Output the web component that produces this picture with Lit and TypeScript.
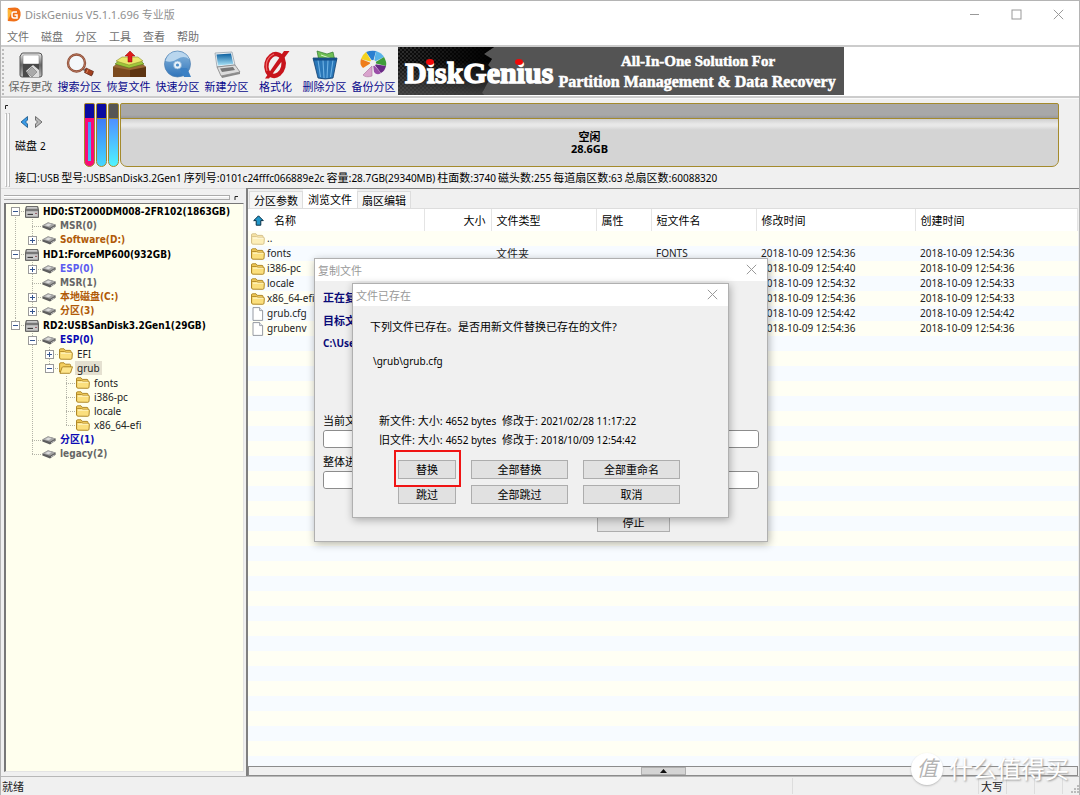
import { LitElement, html, css, svg, nothing } from "lit";
import { customElement } from "lit/decorators.js";
import { classMap } from "lit/directives/class-map.js";

const folderIcon = (faded = false) => html`<svg class="ico ${faded ? "faded" : ""}" width="14" height="12" viewBox="0 0 14 12" aria-hidden="true">
  <path d="M.5 10V2Q.5.8 1.6.8H5L6.4 2.4H11Q12 2.4 12 3.4V5" fill="#f4cf5e" stroke="#a87f1c" stroke-width=".9"/>
  <path d="M2 11.2Q.6 11 .6 10V4.2Q.6 3.4 1.6 3.4H5.6L7 4.4H12.4Q13.5 4.4 13.4 5.4L13 10.2Q12.9 11.3 11.8 11.3Z" fill="#fbdf7d" stroke="#a87f1c" stroke-width=".9"/>
  <path d="M2 5.2H12" stroke="#fff3bd" stroke-width="1.2"/>
</svg>`;

const openFolderIcon = html`<svg class="ico" width="14" height="12" viewBox="0 0 14 12" aria-hidden="true">
  <path d="M.6 10V2Q.6.8 1.7.8H5L6.4 2.2H10.6Q11.6 2.2 11.6 3.4V10Z" fill="#f4cf5e" stroke="#a87f1c" stroke-width=".9"/>
  <path d="M1 11.3L3 5.6Q3.3 4.8 4.2 4.8H13.5L11.6 10.6Q11.3 11.3 10.5 11.3Z" fill="#fde58c" stroke="#a87f1c" stroke-width=".9"/>
</svg>`;

const fileIcon = html`<svg class="ico" width="14" height="14" viewBox="0 0 14 14" aria-hidden="true">
  <path d="M2 .6H8.6L11.6 3.6V13.4H2Z" fill="#fff" stroke="#8a8f98" stroke-width=".9"/>
  <path d="M8.6.6V3.6H11.6" fill="#e3e7ee" stroke="#8a8f98" stroke-width=".8"/>
</svg>`;

const diskIcon = html`<svg class="ico" width="14" height="12" viewBox="0 0 14 12" aria-hidden="true">
  <path d="M1.2.6H12.8L13.5 4V11.4H.5V4Z" fill="#a4a4a4" stroke="#555" stroke-width=".9"/>
  <path d="M2 1.800H12" stroke="#ddd"/><path d="M1 4H13" stroke="#5a5a5a" stroke-width="1.200"/>
  <rect x="1.400" y="5.500" width="11.200" height="4.800" fill="#c9c9c9"/>
  <path d="M2.500 8.400H8" stroke="#333" stroke-width="1.1"/><circle cx="11" cy="7.4" r=".7" fill="#7a2030"/>
</svg>`;

const partIcon = html`<svg class="ico" width="14" height="12" viewBox="0 0 14 12" aria-hidden="true">
  <path d="M.4 5.6L6 2.4L13.6 4.6V6.8L8 10.4L.4 7.6Z" fill="#5d5d5d"/>
  <path d="M.4 5.4L6 2.2L13.6 4.4L8 7.8Z" fill="#a4a4a4"/>
  <path d="M3 5.2L6.2 3.4L9.6 4.4L6.6 6.2Z" fill="#dcdcdc"/>
  <path d="M9 9L12.4 6.8" stroke="#ddd" stroke-width=".8"/>
</svg>`;

const closeGlyph = html`<svg width="11" height="11" viewBox="0 0 11 11" aria-hidden="true"><path d="M.8.8L10.2 10.2M10.2.8L.8 10.2" stroke="#999" stroke-width="1"/></svg>`;

const tools = [
  { label: "保存更改", off: true, art: svg`
    <path d="M4 4Q4 2 6 2H22Q25 2 25 5V24Q25 26 23 26H5Q3 26 3 24V5Z" fill="url(#metal)" stroke="#555"/>
    <rect x="6" y="4" width="16" height="9" rx="1" fill="#fff" stroke="#888" stroke-width=".6"/>
    <path d="M6 13H22V26H6Z" fill="#4a4a4a"/><path d="M9 20L16 14L22 19V26H13Z" fill="#ddd"/>
    <path d="M10 21L15 16L20 21L15 26Z" fill="#aaa" stroke="#777" stroke-width=".6"/>` },
  { label: "搜索分区", art: svg`
    <path d="M17 18L27 23" stroke="#777" stroke-width="2"/>
    <circle cx="10.500" cy="12" r="8.500" fill="#f4f8fb" stroke="#8b4a33" stroke-width="2.400"/>
    <circle cx="10.500" cy="12" r="8.500" fill="none" stroke="#c98a70" stroke-width=".7"/>
    <path d="M20 17L27.500 20.500L25.500 25L18.500 21.500Z" fill="#a3401f" stroke="#5e2413" stroke-width=".7"/>
    <path d="M22 18.500L20.500 22" stroke="#e08a60" stroke-width="1"/>` },
  { label: "恢复文件", art: svg`
    <path d="M-2 16L4 11H25L31 16V26H-2Z" fill="#5d3411"/><path d="M-2 16H15V26H-2Z" fill="#7b4a1e"/>
    <path d="M-2 16L4 11H25L31 16L15 19Z" fill="#9b6a35"/>
    <path d="M0 13L6 8H24L29 13L14 17Z" fill="#9dc63a" stroke="#55761b" stroke-width=".6"/>
    <path d="M1 10L7 6H23L28 10L14 14Z" fill="#e9e86a" stroke="#8c8f2c" stroke-width=".6"/>
    <path d="M13 11V5H10L15 0L20 5H17V11Z" fill="#e01919" stroke="#8d0a0a" stroke-width=".5"/>` },
  { label: "快速分区", art: svg`
    <circle cx="13.500" cy="13" r="13" fill="url(#blue)" stroke="#4f7fb0" stroke-width=".7"/>
    <path d="M1.500 10Q8 12 13.500 8Q20 4 25.500 8.500Q22 1 13.500 .6Q4 1 1.500 10Z" fill="#b9d6ee"/>
    <path d="M15 17H23L27 26H20Z" fill="#3b80c4"/>
    <circle cx="13.500" cy="14" r="4" fill="#e8f2fa" stroke="#7ba7d0" stroke-width=".7"/><circle cx="13.500" cy="14" r="1.600" fill="#4d8dc9"/>` },
  { label: "新建分区", art: svg`
    <path d="M2 2L19 1L22 14L4 16Z" fill="#e8eef2" stroke="#8e9aa3" stroke-width=".7"/>
    <path d="M3.500 3.500L18 2.500L20.300 13L5 14.500Z" fill="url(#screen)"/>
    <path d="M4 16L22 14L27 21L8 25Z" fill="#dcdcdc" stroke="#777" stroke-width=".7"/>
    <path d="M7 17.500L20 16L22 19L9 21Z" fill="#777"/><path d="M8 25L27 21V23L9 27Z" fill="#8a8a8a"/>` },
  { label: "格式化", art: svg`
    <ellipse cx="13" cy="14" rx="8.500" ry="11" transform="rotate(14 13 14)" fill="none" stroke="#c8141c" stroke-width="4.500"/>
    <path d="M3 27.500L22 0H27.500L7 27.500Z" fill="#c8141c"/>
    <path d="M5 20Q2 8 12 3" fill="none" stroke="#ef6a6a" stroke-width="1.200"/>` },
  { label: "删除分区", art: svg`
    <path d="M6 0L16 3L22 1L24 10H8Z" fill="#6fbf55" stroke="#2f7a2c" stroke-width=".7"/><path d="M10 4L21 8" stroke="#d9f3c9"/>
    <path d="M2 7H26L22 27Q14 29 7 27Z" fill="#2a77b8" stroke="#123f6e" stroke-width=".8"/>
    <path d="M7 9L9.500 26M12 9L13 27M17 9L16 27M22 9L19.500 26" stroke="#6fb2e4" stroke-width="1.100"/>
    <path d="M2 7H26V9.500H2.500Z" fill="#164f86"/>` },
  { label: "备份分区", art: svg`
    <path d="M13 11L6 1Q11-1 16 0Z" fill="#2a7fd0"/><path d="M14 11L16 0Q22 2 24 6Z" fill="#58b3e8"/>
    <path d="M14 12L24 6Q27 11 26 15Z" fill="#3f9d3a"/><path d="M14 13L26 15Q25 20 21 22Z" fill="#6a2a86"/>
    <path d="M13 13L21 22Q17 25 14 21Z" fill="#9a4ea8"/>
    <path d="M12 11L6 1Q2 4 1 8Z" fill="#f4d21f"/><path d="M11 12L1 8Q-1 13 3 17Z" fill="#ee7d1b"/>
    <path d="M12 15L3 24Q6 27 12 25Z" fill="#d9a3cd" stroke="#a66f9b" stroke-width=".6"/>
    <circle cx="13" cy="12" r="3" fill="#f1f1f1"/>` },
];

interface Node {
  name: string;
  kind: "disk" | "part" | "folder" | "open";
  tone?: string;
  open?: boolean;
  closed?: boolean;
  children?: Node[];
}

const tree: Node[] = [
  { name: "HD0:ST2000DM008-2FR102(1863GB)", kind: "disk", tone: "black", open: true, children: [
    { name: "MSR(0)", kind: "part", tone: "grey" },
    { name: "Software(D:)", kind: "part", tone: "brown", closed: true },
  ] },
  { name: "HD1:ForceMP600(932GB)", kind: "disk", tone: "black", open: true, children: [
    { name: "ESP(0)", kind: "part", tone: "violet", closed: true },
    { name: "MSR(1)", kind: "part", tone: "grey" },
    { name: "本地磁盘(C:)", kind: "part", tone: "brown", closed: true },
    { name: "分区(3)", kind: "part", tone: "brown", closed: true },
  ] },
  { name: "RD2:USBSanDisk3.2Gen1(29GB)", kind: "disk", tone: "black", open: true, children: [
    { name: "ESP(0)", kind: "part", tone: "navy", open: true, children: [
      { name: "EFI", kind: "folder", closed: true },
      { name: "grub", kind: "open", open: true, children: [
        { name: "fonts", kind: "folder" },
        { name: "i386-pc", kind: "folder" },
        { name: "locale", kind: "folder" },
        { name: "x86_64-efi", kind: "folder" },
      ] },
    ] },
    { name: "分区(1)", kind: "part", tone: "navy" },
    { name: "legacy(2)", kind: "part", tone: "grey" },
  ] },
];

const files = [
  { name: "..", icon: folderIcon(true), type: "", short: "", mod: "", made: "" },
  { name: "fonts", icon: folderIcon(), type: "文件夹", short: "FONTS", mod: "2018-10-09 12:54:36", made: "2018-10-09 12:54:36" },
  { name: "i386-pc", icon: folderIcon(), type: "", short: "", mod: "2018-10-09 12:54:40", made: "2018-10-09 12:54:36" },
  { name: "locale", icon: folderIcon(), type: "", short: "", mod: "2018-10-09 12:54:32", made: "2018-10-09 12:54:33" },
  { name: "x86_64-efi", icon: folderIcon(), type: "", short: "", mod: "2018-10-09 12:54:36", made: "2018-10-09 12:54:33" },
  { name: "grub.cfg", icon: fileIcon, type: "", short: "", mod: "2018-10-09 12:54:42", made: "2018-10-09 12:54:42" },
  { name: "grubenv", icon: fileIcon, type: "", short: "", mod: "2018-10-09 12:54:36", made: "2018-10-09 12:54:36" },
];

const info = [
  ["接口", "USB"], ["型号", "USBSanDisk3.2Gen1"], ["序列号", "0101c24fffc066889e2c"],
  ["容量", "28.7GB(29340MB)"], ["柱面数", "3740"], ["磁头数", "255"],
  ["每道扇区数", "63"], ["总扇区数", "60088320"],
];

const base = css`
  * { box-sizing: border-box; }
  button {
    font: inherit;
    color: inherit;
    padding: 0;
    border: 0;
    background: none;
  }
  .ico { display: block; flex: none; }
  .faded { opacity: .5; }
`;

@customElement("disk-tree")
export class DiskTree extends LitElement {
  static styles = [base, css`
    :host { display: block; font-size: 10px; padding-left: 1px; }
    ul { list-style: none; margin: 0; padding: 0; }
    ul ul { padding-left: 17px; }
    ul ul ul ul { padding-top: 1px; padding-bottom: 1px; }
    li {
      background: repeating-linear-gradient(#b4b4a8 0 1px, transparent 1px 2px) 8px 0 / 1px 100% no-repeat;
    }
    li:last-child { background-size: 1px 7px; }
    .root > li:first-child { background-position: 8px 7px; }
    .row {
      display: flex;
      align-items: center;
      height: 14px;
      background: repeating-linear-gradient(90deg, #b4b4a8 0 1px, transparent 1px 2px) 8px 7px / 10px 1px no-repeat;
    }
    .disk { height: 15px; }
    .slot { width: 18px; display: flex; padding-left: 4px; }
    .box { width: 9px; height: 9px; display: block; }
    .name { margin-left: 2px; padding: 0 2px; line-height: 14px; color: #222; white-space: nowrap; }
    .bold { font-weight: 700; font-family: "DejaVu Sans Condensed", "Noto Sans CJK SC", sans-serif; }
    .black { color: #000; }
    .grey { color: #666; }
    .brown { color: #b05a08; }
    .violet { color: #5c5cf0; }
    .navy { color: #0a0ab4; }
    .sel { background: #e4e0d0; }
  `];

  private node(n: Node): unknown {
    const icon = n.kind === "disk" ? diskIcon : n.kind === "part" ? partIcon : n.kind === "open" ? openFolderIcon : folderIcon();
    return html`<li>
      <div class=${classMap({ row: true, disk: n.kind === "disk" })}>
        <span class="slot">${n.open || n.closed ? html`<button class="box" aria-label=${n.open ? "折叠" : "展开"}>
          <svg class="ico" width="9" height="9" viewBox="0 0 9 9"><rect x=".5" y=".5" width="8" height="8" fill="#fff" stroke="#9a9a9a"/><path d=${n.open ? "M2 4.5H7" : "M2 4.5H7M4.5 2V7"} stroke="#35558f"/></svg>
        </button>` : nothing}</span>
        ${icon}
        <span class="name ${n.tone ? "bold " + n.tone : ""} ${n.kind === "open" ? "sel" : ""}">${n.name}</span>
      </div>
      ${n.children ? html`<ul>${n.children.map((c) => this.node(c))}</ul>` : nothing}
    </li>`;
  }

  render() {
    return html`<ul class="root">${tree.map((n) => this.node(n))}</ul>`;
  }
}

@customElement("dg-banner")
export class DgBanner extends LitElement {
  static styles = css`
    :host { display: block; width: 446px; height: 48px; }
    svg { display: block; }
    text { font-family: "Liberation Serif", serif; font-weight: 700; fill: #fff; stroke: #fff; }
    .brand { font-size: 30px; stroke-width: 1.4px; }
    .top { font-size: 15px; stroke-width: .5px; }
    .sub { font-size: 16px; stroke-width: .5px; }
  `;
  render() {
    return html`<svg width="446" height="48" viewBox="0 0 446 48" role="img" aria-label="DiskGenius">
      <defs>
        <pattern id="mesh" width="4" height="4" patternUnits="userSpaceOnUse"><rect width="4" height="4" fill="#111"/><rect width="2" height="2" fill="#3c3c3c"/><rect x="2" y="2" width="2" height="2" fill="#333"/></pattern>
        <linearGradient id="fade"><stop offset="0" stop-color="#000" stop-opacity=".2"/><stop offset=".6" stop-color="#000" stop-opacity=".7"/><stop offset="1" stop-color="#000"/></linearGradient>
        <linearGradient id="low" x2="0" y2="1"><stop offset=".3" stop-color="#555" stop-opacity="0"/><stop offset="1" stop-color="#555" stop-opacity=".7"/></linearGradient>
      </defs>
      <rect width="446" height="48" fill="#545454"/>
      <path d="M0 0H96L86 7L94 12L90 18L96 24L84 46L86 48H0Z" fill="url(#mesh)"/>
      <path d="M0 0H96L86 7L94 12L90 18L96 24L84 46L86 48H0Z" fill="url(#fade)"/>
      <rect width="100" height="48" fill="url(#low)"/>
      <text class="brand" x="7" y="36">DiskGenius</text>
      <ellipse cx="32" cy="15" rx="4" ry="3" fill="#f00808"/><ellipse cx="121" cy="15" rx="4" ry="3" fill="#f00808"/>
      <text class="top" x="300" y="19" text-anchor="middle">All-In-One Solution For</text>
      <text class="sub" x="299" y="40" text-anchor="middle">Partition Management &amp; Data Recovery</text>
    </svg>`;
  }
}

@customElement("copy-dialogs")
export class CopyDialogs extends LitElement {
  static styles = [base, css`
    :host { display: block; font-size: 11px; }
    .win {
      position: absolute;
      background: #f0f0f0;
      border: 1px solid #b0b0b0;
      box-shadow: 1px 2px 8px rgba(0, 0, 0, .3);
      color: #000;
    }
    .copy { left: 313px; top: 257px; width: 454px; height: 284px; }
    .exists { left: 351px; top: 282px; width: 377px; height: 235px; }
    header {
      display: flex;
      justify-content: space-between;
      align-items: center;
      height: 22px;
      background: #fff;
      color: #999;
      padding: 0 10px 0 3px;
    }
    header button { display: block; }
    .body { padding: 5px 8px; }
    .state { margin: 0; font-weight: 700; color: #0a0a78; line-height: 23px; }
    .lat { font-size: 10px; }
    .copy label { display: block; line-height: 18px; }
    .gap { height: 57px; }
    progress {
      appearance: none;
      display: block;
      width: 100%;
      height: 18px;
      margin-bottom: 5px;
      border: 1px solid #8c8c8c;
      border-radius: 3px;
      background: #fff;
    }
    progress::-webkit-progress-bar { background: #fff; border-radius: 3px; }
    .btn {
      height: 19px;
      line-height: 17px;
      background: #e1e1e1;
      border: 1px solid #adadad;
      text-align: center;
    }
    .stop { display: block; width: 73px; margin: 24px 0 0 274px; }
    .exists .body { padding: 11px 17px; }
    p { margin: 0; line-height: 19px; white-space: pre; }
    p span { line-height: 1; }
    .path { padding: 16px 3px 40px; }
    .meta { padding-left: 9px; }
    .acts {
      display: grid;
      grid-template-columns: 58px 97px 97px;
      gap: 6px 15px;
      padding: 11px 0 0 28px;
    }
    .mark {
      position: absolute;
      left: 393px;
      top: 449px;
      width: 67px;
      height: 37px;
      border: 2px solid #f01414;
      pointer-events: none;
    }
  `];
  render() {
    return html`
      <section class="win copy" role="dialog" aria-label="复制文件">
        <header><span>复制文件</span><button aria-label="关闭">${closeGlyph}</button></header>
        <div class="body">
          <p class="state">正在复</p>
          <p class="state">目标文</p>
          <p class="state lat">C:\\User</p>
          <div class="gap"></div>
          <label for="cur">当前文</label><progress id="cur" max="100" value="0"></progress>
          <label for="all">整体进</label><progress id="all" max="100" value="0"></progress>
          <button class="btn stop">停止</button>
        </div>
      </section>
      <section class="win exists" role="dialog" aria-label="文件已存在">
        <header><span>文件已存在</span><button aria-label="关闭">${closeGlyph}</button></header>
        <div class="body">
          <p>下列文件已存在。是否用新文件替换已存在的文件?</p>
          <p class="path lat">\\grub\\grub.cfg</p>
          <p class="meta">新文件: 大小: <span class="lat">4652 bytes</span>  修改于: <span class="lat">2021/02/28 11:17:22</span></p>
          <p class="meta">旧文件: 大小: <span class="lat">4652 bytes</span>  修改于: <span class="lat">2018/10/09 12:54:42</span></p>
          <div class="acts">
            <button class="btn">替换</button><button class="btn">全部替换</button><button class="btn">全部重命名</button>
            <button class="btn">跳过</button><button class="btn">全部跳过</button><button class="btn">取消</button>
          </div>
        </div>
      </section>
      <div class="mark"></div>`;
  }
}

@customElement("app-root")
export class AppRoot extends LitElement {
  static styles = [base, css`
    :host {
      display: flex;
      flex-direction: column;
      position: relative;
      height: 100vh;
      min-height: 600px;
      overflow: hidden;
      box-sizing: border-box;
      background: #f0f0f0;
      border: 1px solid #b4b4b4;
      border-bottom: 0;
      font-family: "Noto Sans", "Noto Sans CJK SC", sans-serif;
      font-size: 11px;
      color: #000;
    }
    .title {
      display: flex;
      align-items: center;
      height: 26px;
      background: #fff;
      color: #909090;
      padding-left: 6px;
    }
    .title h1 { font: inherit; margin: 0 auto 0 4px; }
    .title button { width: 42px; display: flex; justify-content: center; }
    .menu {
      display: flex;
      gap: 12px;
      height: 18px;
      background: #fff;
      padding-left: 6px;
      color: #707070;
    }
    .menu button { line-height: 19px; }
    .tools {
      display: flex;
      height: 53px;
      background: #fff;
      border-top: 2px solid #ccc;
      border-bottom: 2px solid #ccc;
    }
    .set {
      display: flex;
      padding-left: 5px;
      background: radial-gradient(circle at 1px 1px, #bbb 1px, transparent 1px) 1px 2px / 3px 4px repeat-y, #f0f0f0;
    }
    .set button {
      display: flex;
      flex-direction: column;
      align-items: center;
      width: 49px;
      padding-top: 4px;
      color: #0a0a8c;
      line-height: 13px;
      gap: 1px;
      white-space: nowrap;
    }
    .set .off { color: #666; }
    .set svg { overflow: visible; }
    .disk { display: flex; border-top: 1px solid #fafafa; padding: 4px 20px 4px 4px; height: 90px; }
    .grip { width: 10px; padding-top: 1px; }
    .grip div { display: flex; gap: 1px; height: 74px; margin-top: 3px; }
    .grip svg { display: block; }
    .grip i { width: 2px; border: 1px solid #bbb; border-left-color: #fff; }
    .panel { flex: 1; min-width: 0; display: grid; grid-template: 64px 22px / 69px 1fr; }
    .nav { padding-top: 12px; }
    .nav div { display: flex; gap: 5px; margin-bottom: 8px; padding-left: 5px; }
    .lat { font-size: 10px; }
    .bars { display: flex; gap: 1px; }
    .bar {
      width: 11px;
      border: 1px solid #a48a2c;
      border-radius: 2px 2px 6px 6px;
      background: linear-gradient(#0a0aa0 0 14px, #a48a2c 14px 15px, #3f7cf8 15px, #46d8ff);
    }
    .picked { background: linear-gradient(#0a0aa0 0 14px, transparent 14px), linear-gradient(#4a8cff, #3fc4f8) 3px 18px / 3px 39px no-repeat, #f80a78; }
    .other { background: linear-gradient(#555 0 14px, #a48a2c 14px 15px, #4f90ff 15px, #4ff4ff); }
    .free {
      flex: 1;
      border: 1px solid #a48a2c;
      border-radius: 2px 2px 7px 7px;
      background: linear-gradient(#a8a8a8 0 11px, #989898 14px, #a48a2c 14px 15px, #d0d0d0 15px, #e8e8e8 20px, #e8e8e8 22px, #d4d4d4 26px);
      padding-top: 27px;
      text-align: center;
      font-weight: 700;
      line-height: 12px;
    }
    .info { grid-column: 1 / 3; display: flex; gap: 2px; align-items: baseline; line-height: 21px; white-space: nowrap; margin: 0; }
    .info dt, .info dd { display: inline; margin: 0; }
    .main { flex: 1; min-height: 0; display: grid; grid-template-columns: 245px 1fr; }
    .left { display: flex; flex-direction: column; padding: 6px 2px 4px 3px; border-top: 1px solid #ddd; }
    .handle { display: flex; height: 8px; gap: 4px; }
    .handle div { width: 226px; height: 5px; border: 1px solid #aaa; border-left: 0; box-shadow: inset 0 1px #fff; }
    .tree {
      flex: 1;
      min-height: 0;
      background: #ffffee;
      border: 1px solid #e4e4e4;
      border-top-color: #777;
      border-left: 2px solid #777;
      overflow: hidden;
    }
    .right { display: flex; flex-direction: column; min-width: 0; border-left: 2px solid #808080; border-top: 1px solid #808080; padding-right: 1px; }
    .tabs { display: flex; align-items: flex-end; height: 20px; padding-left: 1px; border-bottom: 1px solid #ddd; }
    .tabs button { height: 17px; padding: 0 4px; line-height: 17px; background: #f6f6f6; border: 1px solid #ddd; border-bottom: 0; }
    .tabs .on { height: 19px; background: #fff; border-color: #fff; }
    .list {
      flex: 1;
      min-height: 0;
      overflow: hidden;
      background: repeating-linear-gradient(#fffff4 0 15px, #f7fbff 15px 30px) 0 22px;
    }
    table { width: 100%; border-collapse: collapse; table-layout: fixed; }
    th { height: 22px; background: #fff; font-weight: 400; text-align: left; padding: 0 5px; border-right: 1px solid #e4e4e4; }
    th.num { text-align: right; }
    .sort { display: flex; gap: 10px; align-items: center; }
    td { height: 15px; padding: 0 5px; font-size: 10px; line-height: 15px; white-space: nowrap; color: #222; }
    td.cjk { font-size: 11px; }
    td:first-child { padding-left: 3px; }
    .file { display: flex; align-items: center; gap: 2px; height: 15px; }
    .split {
      height: 10px;
      border: 1px solid #8c8c8c;
      display: flex;
      justify-content: center;
      flex: none;
    }
    .split button { width: 45px; background: #d4d4d4; border: 1px solid #b0b0b0; display: flex; align-items: center; justify-content: center; }
    .status { display: flex; align-items: center; height: 19px; border-top: 1px solid #b8b8b8; color: #222; padding-left: 1px; flex: none; }
    .status span { height: 16px; line-height: 18px; border-right: 1px solid #ddd; padding: 0 3px 0 2px; }
    .status .first { flex: 1; padding-left: 0; }
    .status .wide { width: 186px; }
    .status .slot { width: 28px; }
    .status svg { margin: 6px 0 0 8px; width: 8px; }
    .water {
      position: absolute;
      right: 10px;
      bottom: 9px;
      display: flex;
      align-items: center;
      gap: 6px;
      color: #fff;
      font-size: 24px;
      line-height: 34px;
      text-shadow: 1px 1px 2px #999;
    }
    .seal { width: 32px; height: 32px; border-radius: 50%; background: #fff; box-shadow: 0 1px 2px #bbb; color: #b4b4b4; font-size: 21px; line-height: 30px; text-align: center; text-shadow: none; font-style: italic; }
  `];

  render() {
    return html`
      <div class="title">
        <svg width="14" height="15" viewBox="0 0 14 15" aria-hidden="true"><path d="M1 1L8 .6Q14 1 13.6 8Q13 14 7 14.600L.8 14Z" fill="#f07018"/><path d="M.6 1.500L5 4L3 9L1 13Z" fill="#ffb638"/><path d="M10 5H6.500Q5 5 5 7V9Q5 11 7 11H10V8H7.500" fill="none" stroke="#fff" stroke-width="1.500"/></svg>
        <h1>DiskGenius V5.1.1.696 专业版</h1>
        <button aria-label="最小化"><svg width="11" height="11"><path d="M1 5.500H10" stroke="#999"/></svg></button>
        <button aria-label="最大化"><svg width="11" height="11"><rect x="1" y="1" width="9" height="9" fill="none" stroke="#999"/></svg></button>
        <button aria-label="关闭">${closeGlyph}</button>
      </div>
      <nav class="menu">${["文件", "磁盘", "分区", "工具", "查看", "帮助"].map((m) => html`<button>${m}</button>`)}</nav>
      <div class="tools">
        <div class="set">${tools.map((t) => html`<button class=${classMap({ off: !!t.off })}>
          <svg width="28" height="28" viewBox="0 0 28 28" aria-hidden="true">
            <defs>
              <linearGradient id="metal" x2="0" y2="1"><stop stop-color="#eee"/><stop offset=".5" stop-color="#666"/><stop offset="1" stop-color="#bbb"/></linearGradient>
              <linearGradient id="blue" x2="0" y2="1"><stop stop-color="#8bb8de"/><stop offset="1" stop-color="#2f74ba"/></linearGradient>
              <linearGradient id="screen" x2="0" y2="1"><stop stop-color="#0a5e9e"/><stop offset="1" stop-color="#a9e3f7"/></linearGradient>
            </defs>${t.art}</svg>${t.label}</button>`)}</div>
        <dg-banner></dg-banner>
      </div>
      <section class="disk">
        <div class="grip"><svg width="4" height="6" viewBox="0 0 4 6"><path d="M.5 5V1.500H3" stroke="#222" fill="none"/></svg><div><i></i><i></i></div></div>
        <div class="panel">
          <div class="nav">
            <div>
              <button aria-label="上一个磁盘"><svg class="ico" width="9" height="14" viewBox="0 0 9 14"><path d="M7.500 1.500L1 7L7.500 12.500V9L5.500 7L7.500 5Z" fill="#3a9be8" stroke="#17507f" stroke-width=".8"/></svg></button>
              <button aria-label="下一个磁盘"><svg class="ico" width="9" height="14" viewBox="0 0 9 14"><path d="M1.500 1.500L8 7L1.500 12.500V9L3.500 7L1.500 5Z" fill="#b8b8b8" stroke="#555" stroke-width=".8"/></svg></button>
            </div>
            磁盘 <span class="lat">2</span>
          </div>
          <div class="bars">
            <div class="bar picked"></div><div class="bar"></div><div class="bar other"></div>
            <div class="free"><div>空闲</div><div>28.6GB</div></div>
          </div>
          <dl class="info">${info.map(([k, v]) => html`<div><dt>${k}:</dt><dd class="lat">${v}</dd></div>`)}</dl>
        </div>
      </section>
      <main class="main">
        <aside class="left">
          <div class="handle"><div></div><svg width="5" height="6" viewBox="0 0 5 6"><path d="M1 5V1.500H4" stroke="#222" fill="none"/></svg></div>
          <div class="tree"><disk-tree></disk-tree></div>
        </aside>
        <section class="right">
          <div class="tabs"><button>分区参数</button><button class="on">浏览文件</button><button>扇区编辑</button></div>
          <div class="list">
            <table>
              <colgroup><col width="176"><col width="67"><col width="105"><col width="55"><col width="105"><col width="159"><col></colgroup>
              <thead><tr>
                <th><div class="sort"><svg width="11" height="11" viewBox="0 0 11 11" aria-hidden="true"><path d="M5.500 .8L10.300 5.600H7.800V10.200H3.200V5.600H.7Z" fill="#2196c8" stroke="#0a3046"/></svg>名称</div></th>
                <th class="num">大小</th><th>文件类型</th><th>属性</th><th>短文件名</th><th>修改时间</th><th>创建时间</th>
              </tr></thead>
              <tbody>${files.map((f) => html`<tr>
                <td><div class="file">${f.icon}${f.name}</div></td><td></td><td class="cjk">${f.type}</td><td></td><td>${f.short}</td><td>${f.mod}</td><td>${f.made}</td>
              </tr>`)}</tbody>
            </table>
          </div>
          <div class="split"><button aria-label="展开预览"><svg width="7" height="4"><path d="M0 4L3.500 0L7 4Z" fill="#111"/></svg></button></div>
        </section>
      </main>
      <footer class="status">
        <span class="first">就绪</span><span class="wide"></span><span>大写</span><span class="slot"></span><span class="slot"></span>
        <svg width="16" height="10" viewBox="0 0 8 10"><path d="M6 1h2v2H6zM3 4h2v2H3zM6 4h2v2H6zM0 7h2v2H0zM3 7h2v2H3zM6 7h2v2H6z" fill="#bbb"/></svg>
      </footer>
      <copy-dialogs></copy-dialogs>
      <div class="water"><span class="seal">值</span>什么值得买</div>
    `;
  }
}
